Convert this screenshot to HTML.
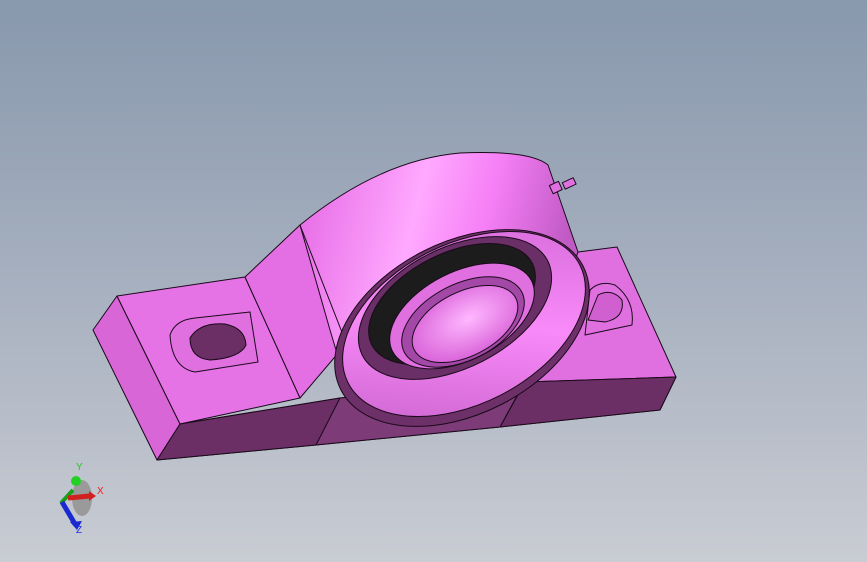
<!DOCTYPE html>
<html><head><meta charset="utf-8"><style>
html,body{margin:0;padding:0;width:867px;height:562px;overflow:hidden}
body{background:linear-gradient(#8898ad 0%,#a3adbd 45%,#c9ccd3 100%);font-family:"Liberation Sans",sans-serif}
svg{position:absolute;left:0;top:0}
</style></head><body>
<svg width="867" height="562" viewBox="0 0 867 562">
<defs>
<linearGradient id="cyl" x1="0" y1="0" x2="1" y2="0.2">
<stop offset="0" stop-color="#e466e4"/><stop offset="0.45" stop-color="#ffa9ff"/><stop offset="0.7" stop-color="#f67ff6"/><stop offset="1" stop-color="#c05ac4"/></linearGradient>
<radialGradient id="bore" cx="0.55" cy="0.45" r="0.6"><stop offset="0" stop-color="#ffb8ff"/><stop offset="1" stop-color="#d860d8"/></radialGradient>
<linearGradient id="ring" x1="0" y1="1" x2="1" y2="0"><stop offset="0" stop-color="#c45ec8"/><stop offset="0.5" stop-color="#f98af9"/><stop offset="1" stop-color="#d066d4"/></linearGradient>
</defs>
<g stroke="#1a0a1a" stroke-width="1" stroke-linejoin="round">
<polygon points="157,460 180,424 340,398 500,384 525,380 676,377 660,410 500,427 316,445" fill="#6e3068"/>
<polygon points="93,330 117,296 180,424 157,460" fill="#d866d6"/>
<polygon points="117,296 245,277 300,398 180,424" fill="#e673e6"/>
<polygon points="180,424 340,398 338,410 316,445 157,460" fill="#6b2f66"/>
<polygon points="578,252 617,247 676,377 525,382" fill="#e070e0"/>
<polygon points="525,382 676,377 660,410 500,427" fill="#6b2f66"/>
<polygon points="316,445 340,398 525,381 500,427" fill="#7d3b78"/>
<polygon points="245,277 300,225 345,345 300,398" fill="#e46ee4"/>
<path d="M300,225 Q380,160 460,153 Q530,150 548,165 L578,252 Q560,300 520,370 L345,380 L330,330 Z" fill="url(#cyl)"/>
<path d="M300,225 L345,340" fill="none"/>
<ellipse cx="462" cy="328" rx="136" ry="86" transform="rotate(-27 462 328)" fill="#6e3068"/>
<ellipse cx="464" cy="324" rx="130" ry="80" transform="rotate(-27 464 324)" fill="url(#ring)"/>
<ellipse cx="455" cy="308" rx="104" ry="60" transform="rotate(-27 455 308)" fill="#6a2f66"/>
<ellipse cx="452" cy="304" rx="90" ry="50" transform="rotate(-27 452 304)" fill="#1c1c1c"/>
<ellipse cx="462" cy="316" rx="78" ry="44" transform="rotate(-27 462 316)" fill="#e070e0"/>
<ellipse cx="463" cy="322" rx="66" ry="38" transform="rotate(-27 463 322)" fill="#a448a8"/>
<ellipse cx="465" cy="324" rx="57" ry="32" transform="rotate(-27 465 324)" fill="url(#bore)"/>
<path d="M170,335 Q175,320 195,318 L250,312 L258,362 L195,372 Q172,368 170,335 Z" fill="#e070e0"/>
<path d="M190,338 Q200,322 225,324 Q245,328 246,345 Q240,358 210,360 Q190,358 190,338 Z" fill="#6b2f66"/>
<path d="M590,290 Q600,280 615,285 Q635,300 632,325 L585,335 Z" fill="#e070e0"/>
<path d="M598,295 Q612,288 622,300 Q625,318 605,322 L588,320 Z" fill="#d060d0"/>
<rect x="551" y="183" width="10" height="9" fill="#e070e0" transform="rotate(-25 556 188)"/>
<rect x="563" y="180" width="12" height="7" fill="#e070e0" transform="rotate(-25 569 183)"/>
</g>
<ellipse cx="82" cy="498" rx="10" ry="18" fill="#9a9a9a"/>
<path d="M73,490 L62,502 L73,520" stroke="#18a018" stroke-width="4" fill="none"/>
<path d="M62,502 L75,524" stroke="#1a2ad0" stroke-width="5" fill="none"/>
<polygon points="70,522 82,521 77,530" fill="#1a2ad0"/>
<path d="M68,498 L90,496" stroke="#d02020" stroke-width="5"/>
<polygon points="89,491 96,496 89,501" fill="#d02020"/>
<circle cx="76" cy="481" r="5" fill="#22d022"/>
<text x="76" y="470" font-size="10" fill="#22cc22">Y</text>
<text x="97" y="494" font-size="10" fill="#ee2020">X</text>
<text x="76" y="533" font-size="10" fill="#2030ee">Z</text>
</svg>
</body></html>
